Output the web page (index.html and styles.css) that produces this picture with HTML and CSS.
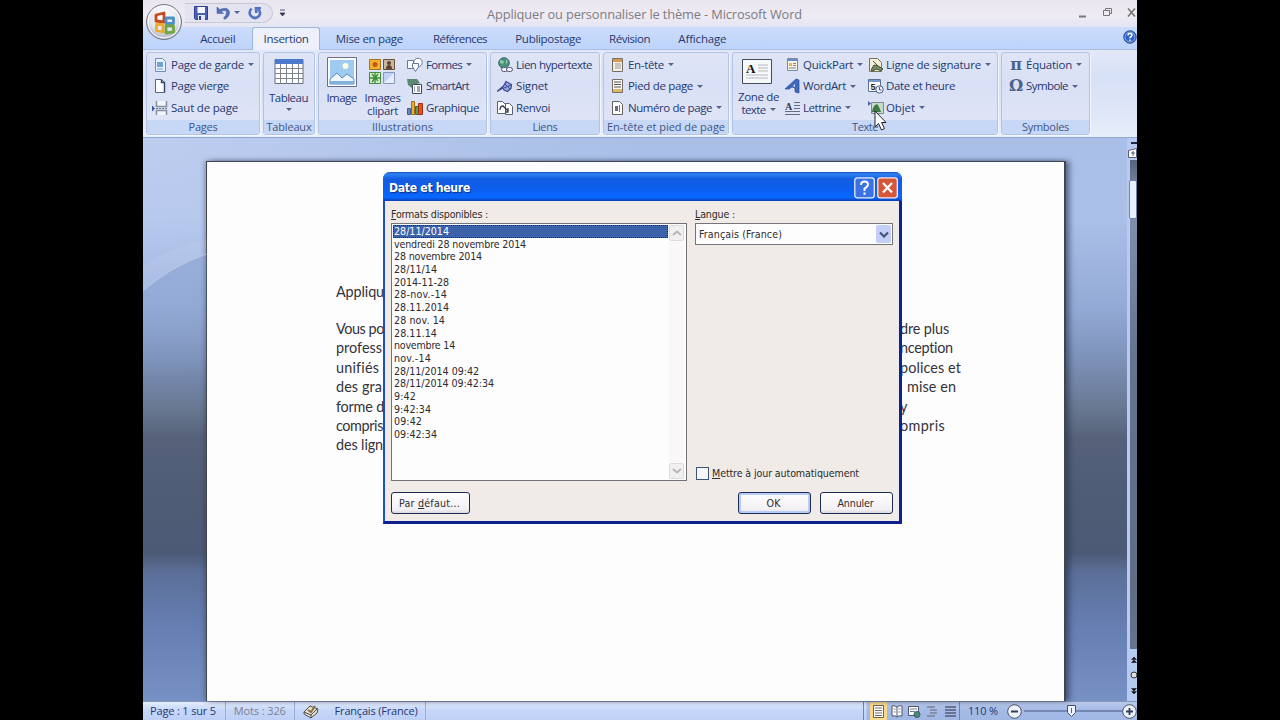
FILE: index.html
```html
<!DOCTYPE html>
<html lang="fr">
<head>
<meta charset="utf-8">
<title>Appliquer ou personnaliser le thème - Microsoft Word</title>
<link rel="stylesheet" href="styles.css">
</head>
<body>
<div class="window">
  <header class="titlebar">
    <div class="qat">
      <svg width="16" height="16" viewBox="0 0 16 16"><path d="M1.500 1.500h13v13h-12l-1-1z" fill="#4b5fb4" stroke="#343f8c"/><path d="M4.500 2h7.500v6H4.500z" fill="#f4f6ff"/><path d="M5 10h7v5H5z" fill="#dfe4f6"/><path d="M6 11h2v4H6z" fill="#34408a"/></svg>
      <svg class="undo" width="14" height="14" viewBox="0 0 14 14"><path d="M1 1v6.500h6.500L5.500 5.300q5-2.300 5 1.200 0 3-3 5.500l1.500 1.500q5-3.500 4.500-7.500-1.500-6-9.500-2.500z" fill="#5672bd" stroke="#44599c" stroke-width=".5"/></svg>
      <i class="arr"></i>
      <svg class="redo" width="14" height="14" viewBox="0 0 14 14"><path d="M3.500 2.500q-3.500 4-.5 7.500 4 4 8 0 2.500-4-1-7" fill="none" stroke="#5672bd" stroke-width="2.600"/><path d="M6.500 1H13v2.200h-3.500V7H7z" fill="#5672bd"/></svg>
    </div>
    <svg class="more" width="7" height="8" viewBox="0 0 7 8"><path d="M1 1h5M1 4h5L3.500 7z" fill="#333a55" stroke="#333a55" stroke-width=".8"/></svg>
    <h1 class="t" data-w="315">Appliquer ou personnaliser le thème - Microsoft Word</h1>
    <svg class="winbtns" width="60" height="16" viewBox="0 0 60 16"><path d="M3 12.500h7" stroke="#777" stroke-width="2"/><path d="M27.500 6.500h6v5h-6zM27 6.500h7M29.500 6v-1.500h6v5h-2" fill="none" stroke="#777"/><path d="M52 4.500l7 8M59 4.500l-7 8" stroke="#777" stroke-width="1.700"/></svg>
  </header>
  <svg class="office" width="40" height="40" viewBox="0 0 40 40">
    <defs><radialGradient id="orb" cx=".5" cy=".3" r=".75"><stop offset="0" stop-color="#fff"/><stop offset=".6" stop-color="#e2e4ec"/><stop offset="1" stop-color="#9aa0b4"/></radialGradient></defs>
    <circle cx="20" cy="20" r="17.500" fill="url(#orb)" stroke="#737886"/><circle cx="20" cy="20" r="16" fill="none" stroke="#fff"/>
    <g fill="none" stroke-width="2.800" stroke-linejoin="round"><path d="M12 13l8-2v9l-8-1z" stroke="#c8491f"/><path d="M22 16h7.500v5.500H22z" stroke="#4c8fca"/><path d="M12.500 22.500H19V30l-6.500-1.500z" stroke="#ecab2f"/><path d="M22 24h7.500v6L22 31z" stroke="#72a546"/></g>
  </svg>
  <nav class="tabs">
    <span class="tab tab1"><b class="t" data-w="35">Accueil</b></span>
    <span class="tab tab2 active"><b class="t" data-w="45">Insertion</b></span>
    <span class="tab tab3"><b class="t" data-w="67">Mise en page</b></span>
    <span class="tab tab4"><b class="t" data-w="54">Références</b></span>
    <span class="tab tab5"><b class="t" data-w="66">Publipostage</b></span>
    <span class="tab tab6"><b class="t" data-w="41">Révision</b></span>
    <span class="tab tab7"><b class="t" data-w="48">Affichage</b></span>
    <svg class="help" width="14" height="14" viewBox="0 0 14 14"><circle cx="7" cy="7" r="6.200" fill="#2d5fc4" stroke="#1c3f94"/><circle cx="7" cy="7" r="5" fill="none" stroke="#a9c4f4" stroke-width=".8"/><path d="M5 5.500q0-2 2-2t2 1.800q0 1-2 2v1M7 9.500v1.500" fill="none" stroke="#fff" stroke-width="1.500"/></svg>
  </nav>
  <section class="ribbon">
    <div class="group g1">
      <div class="body">
        <div class="col c1">
          <div class="cmd"><svg width="16" height="16" viewBox="0 0 16 16"><path d="M3.500 1.500h7l3 3v10h-10z" fill="#e8f1fc" stroke="#6f8fb8"/><path d="M5 5h6v5H5z" fill="#6fa3d8"/><path d="M5 12h6" stroke="#6fa3d8"/></svg><span class="t" data-w="73">Page de garde</span><i class="arr"></i></div>
          <div class="cmd"><svg width="16" height="16" viewBox="0 0 16 16"><path d="M3.500 1.500h6l3 3v10h-9z" fill="#fff" stroke="#55658a"/><path d="M9.500 1.500v3h3v10" fill="none" stroke="#39496d" stroke-width="1.500"/></svg><span class="t" data-w="58">Page vierge</span></div>
          <div class="cmd"><svg width="16" height="16" viewBox="0 0 16 16"><path d="M4.500 1v5.500h10V1M4.500 15v-4.500h10V15" fill="#f5f6f8" stroke="#84909f" stroke-width="1.500"/><path d="M4 8.500h12" stroke="#6c7a90" stroke-dasharray="2 1"/><path d="M0 5.500v6l3-3z" fill="#3a55a0"/></svg><span class="t" data-w="67">Saut de page</span></div>
        </div>
      </div>
      <div class="label"><span class="t" data-w="29">Pages</span></div>
    </div>
    <div class="group g2">
      <div class="body">
        <div class="big b-table"><svg width="30" height="28" viewBox="0 0 30 28"><path d="M1 1.500h28v24H1z" fill="#fff" stroke="#66707f"/><path d="M1 1h28v5H1z" fill="#4c79cb"/><path d="M1 10.500h28M1 15.500h28M1 20.500h28M6.500 6v20M12.500 6v20M18.500 6v20M24.500 6v20" stroke="#808690"/></svg><span class="t" data-w="39">Tableau</span><i class="arr"></i></div>
      </div>
      <div class="label"><span class="t" data-w="45">Tableaux</span></div>
    </div>
    <div class="group g3">
      <div class="body">
        <div class="big b-img"><svg width="30" height="30" viewBox="0 0 30 30"><path d="M.5 .5h29v29H.5z" fill="#fbfcff" stroke="#66718a"/><path d="M3 3h24v24H3z" fill="#9fcaf2"/><circle cx="18.500" cy="9" r="3" fill="#fffbe0"/><path d="M3 22l7-6 5 5 5-4 7 5v5H3z" fill="#eef5fd" stroke="#5e88b8"/><path d="M3 24h24v3H3z" fill="#7fb1df"/></svg><span class="t" data-w="30">Image</span></div>
        <div class="big b-clip"><svg width="27" height="27" viewBox="0 0 27 27"><path d="M.5 1.500h11v10H.5z" fill="#f2b32b" stroke="#a6731f"/><circle cx="6" cy="6.500" r="2.500" fill="#c5541a"/><path d="M14.500 1.500h11v10h-11z" fill="#ccb79b" stroke="#66533d"/><path d="M17 11q0-4 3-4t3 4z" fill="#594536"/><circle cx="20" cy="5" r="2" fill="#594536"/><path d="M.5 14.500h11v11H.5z" fill="#d5efcb" stroke="#478a42"/><path d="M3 16l6 7M9 16l-6 8M6 15v10M1 20h10" stroke="#3e8c3c" stroke-width="1.300"/><path d="M14.500 14.500h11v11h-11z" fill="#bed2f7" stroke="#8796bb"/><path d="M15 25l10-10v10z" fill="#e7effd"/></svg><span class="t" data-w="36">Images</span><span class="t" data-w="31">clipart</span></div>
        <div class="col c3">
          <div class="cmd"><svg width="16" height="16" viewBox="0 0 16 16"><g fill="#fafcff" stroke="#65789e"><circle cx="11" cy="5.500" r="4.300"/><path d="M.5 3.500h6v8h-6z"/><path d="M5.500 6.500h6v3.500l-3 4.500-3-4.500z"/></g></svg><span class="t" data-w="36">Formes</span><i class="arr"></i></div>
          <div class="cmd"><svg width="16" height="16" viewBox="0 0 16 16"><path d="M0 1h10l3 4-3 1H5v4L1 7z" fill="#5b8873"/><path d="M5.500 6.500h9v9h-9z" fill="#fff" stroke="#3f4858"/><path d="M7 9h1m2 0h3M7 11h1m2 0h3M7 13h1m2 0h3" stroke="#46505e"/></svg><span class="t" data-w="43">SmartArt</span></div>
          <div class="cmd"><svg width="16" height="16" viewBox="0 0 16 16"><path d="M.5 8.500h3v6h-3z" fill="#6688ca" stroke="#3f5b94"/><path d="M4.500 1.500h3v13h-3z" fill="#ecae2e" stroke="#a36d12"/><path d="M8.500 6.500h3v8h-3z" fill="#5f9a50" stroke="#39702f"/><path d="M11.500 3.500h4v11h-4z" fill="#dd5526" stroke="#9c3212"/></svg><span class="t" data-w="53">Graphique</span></div>
        </div>
      </div>
      <div class="label"><span class="t" data-w="61">Illustrations</span></div>
    </div>
    <div class="group g4">
      <div class="body">
        <div class="col c4">
          <div class="cmd"><svg width="16" height="16" viewBox="0 0 16 16"><circle cx="7" cy="6" r="5.300" fill="#4d9275" stroke="#366181"/><path d="M3 3l4 1-1 3-3-1zM9 2l2 3-2 2" fill="#8acba8"/><rect x="4.500" y="10.500" width="6" height="4" rx="2" fill="#eef" stroke="#555d70"/><rect x="9.500" y="10.500" width="6" height="4" rx="2" fill="#eef" stroke="#555d70"/></svg><span class="t" data-w="76">Lien hypertexte</span></div>
          <div class="cmd"><svg width="16" height="16" viewBox="0 0 16 16"><path d="M0 13.500L6.500 8 9 3.500l5.500 3-.5 4-3.500 3L7 12l-1-2z" fill="#93a8e5" stroke="#3b4a8c" stroke-width="1.200"/><path d="M8 6l5 5M7 10l7-3" stroke="#3b4a8c"/></svg><span class="t" data-w="32">Signet</span></div>
          <div class="cmd"><svg width="16" height="16" viewBox="0 0 16 16"><path d="M.5 1.500h5l3 3v9h-8zM8.500 3.500h4l3 3v8h-7z" fill="#fff" stroke="#59606f"/><path d="M3 10q0-4 3-4l5 5M11 8v4H8" fill="none" stroke="#374058" stroke-width="1.300"/></svg><span class="t" data-w="34">Renvoi</span></div>
        </div>
      </div>
      <div class="label"><span class="t" data-w="25">Liens</span></div>
    </div>
    <div class="group g5">
      <div class="body">
        <div class="col c5">
          <div class="cmd"><svg width="16" height="16" viewBox="0 0 16 16"><path d="M3.500 1.500h10v13h-10z" fill="#f4efe6" stroke="#776e66"/><path d="M4 2h9v3H4z" fill="#d8974e"/><path d="M6 7h6M6 9h6M6 11h6" stroke="#a19c98"/></svg><span class="t" data-w="36">En-tête</span><i class="arr"></i></div>
          <div class="cmd"><svg width="16" height="16" viewBox="0 0 16 16"><path d="M3.500 1.500h10v13h-10z" fill="#fffdf4" stroke="#776e66"/><path d="M5 4h7M5 6.500h7M5 9h7" stroke="#54514e"/><path d="M4 11h9v3H4z" fill="#e1b56a"/></svg><span class="t" data-w="65">Pied de page</span><i class="arr"></i></div>
          <div class="cmd"><svg width="16" height="16" viewBox="0 0 16 16"><path d="M3.500 1.500h7l3 3v10h-10z" fill="#fff" stroke="#67635f"/><path d="M6 6h3v5H6z" fill="#6c6c72"/><path d="M10.500 5v7" stroke="#777"/></svg><span class="t" data-w="84">Numéro de page</span><i class="arr"></i></div>
        </div>
      </div>
      <div class="label"><span class="t" data-w="118">En-tête et pied de page</span></div>
    </div>
    <div class="group g6">
      <div class="body">
        <div class="big b-zone"><svg width="30" height="26" viewBox="0 0 30 26"><path d="M.5 1.500h29v24H.5z" fill="#f7f8fa" stroke="#444a56"/><path d="M16 7h10M16 10h10M16 13h10M4 17h22M4 20h22" stroke="#b3b8c0"/><text x="4" y="15" class="serifA">A</text></svg><span class="t" data-w="41">Zone de</span><span class="row"><span class="t" data-w="24">texte</span><i class="arr"></i></span></div>
        <div class="col c6">
          <div class="cmd"><svg width="16" height="16" viewBox="0 0 16 16"><path d="M2.500 1.500h10v12h-10z" fill="#f7f4e6" stroke="#7389ad"/><path d="M3 2h9v2H3z" fill="#6c8ac7"/><path d="M4 6h3v3H4z" fill="#e3b751"/><path d="M8 6.500h3M8 8.500h3M4 11h7" stroke="#7d88a0"/></svg><span class="t" data-w="50">QuickPart</span><i class="arr"></i></div>
          <div class="cmd"><svg width="16" height="16" viewBox="0 0 16 16"><path d="M0 11L11 1l3 1v13l-4-1v-4l-3-1-3 2z" fill="#3d68be" stroke="#294a94" stroke-width=".7"/><path d="M8 8l2-2v3z" fill="#dce8ff"/></svg><span class="t" data-w="43">WordArt</span><i class="arr"></i></div>
          <div class="cmd"><svg width="16" height="16" viewBox="0 0 16 16"><text x="0" y="9.500" class="dropA">A</text><path d="M9 2.500h6M9 5.500h6M9 8.500h6M0 11.500h15M0 14.500h15" stroke="#656d80"/></svg><span class="t" data-w="38">Lettrine</span><i class="arr"></i></div>
        </div>
        <div class="col c7">
          <div class="cmd"><svg width="16" height="16" viewBox="0 0 16 16"><path d="M1.500 1.500h8l4 4v9h-12z" fill="#f2efd6" stroke="#77745a"/><path d="M3 13l3-5 4 1 5 3-2 2-4-2-5 2zM5 4l5 5" fill="#739065" stroke="#454e3e"/></svg><span class="t" data-w="95">Ligne de signature</span><i class="arr"></i></div>
          <div class="cmd"><svg width="16" height="16" viewBox="0 0 16 16"><path d="M.5 1.500h12v12H.5z" fill="#fff" stroke="#58709c"/><path d="M1 2h11v2H1z" fill="#7897c7"/><text x="2.500" y="12" class="five">5</text><circle cx="11.500" cy="11.500" r="3.700" fill="#edf4ff" stroke="#4d5a76"/><path d="M11.500 9v3h2" fill="none" stroke="#4d5a76"/></svg><span class="t" data-w="69">Date et heure</span></div>
          <div class="cmd"><svg width="16" height="16" viewBox="0 0 16 16"><path d="M3.500 2.500h12v11h-12z" fill="#c9dbc8" stroke="#798c91"/><path d="M4 12q1-7 5-8 2 2 4 8z" fill="#3e7a47"/><path d="M0 1v5l3-2.500z" fill="#4764a8"/></svg><span class="t" data-w="29">Objet</span><i class="arr"></i></div>
        </div>
      </div>
      <div class="label"><span class="t" data-w="26">Texte</span></div>
    </div>
    <div class="group g7">
      <div class="body">
        <div class="col c8">
          <div class="cmd"><span class="glyph">π</span><span class="t" data-w="46">Équation</span><i class="arr"></i></div>
          <div class="cmd"><span class="glyph">Ω</span><span class="t" data-w="42">Symbole</span><i class="arr"></i></div>
        </div>
      </div>
      <div class="label"><span class="t" data-w="47">Symboles</span></div>
    </div>
  </section>
  <main class="desk">
    <svg class="swoosh" width="64" height="240" viewBox="0 0 64 240"><defs><linearGradient id="fade" x2="0" y2="1"><stop offset="0" stop-color="#5f80b8" stop-opacity=".28"/><stop offset="1" stop-color="#5f80b8" stop-opacity="0"/></linearGradient></defs><path d="M0 110Q28 91 64 83V98Q28 110 0 135z" fill="#fff" fill-opacity=".07"/><path d="M0 135Q28 110 64 98V240H0z" fill="url(#fade)"/><path d="M0 135Q28 110 64 98" fill="none" stroke="#dbe5fa" stroke-opacity=".4"/></svg>
    <article class="page">
      <p class="first"><span class="t" data-w="48">Appliqu</span></p>
      <p><span class="t" data-w="48">Vous po</span><span class="t" data-w="49">dre plus</span></p>
      <p><span class="t" data-w="46">profess</span><span class="t" data-w="53">nception</span></p>
      <p><span class="t" data-w="43">unifiés</span><span class="t" data-w="61">polices et</span></p>
      <p><span class="t" data-w="46">des gra</span><span class="t in" data-w="49">mise en</span></p>
      <p><span class="t" data-w="48">forme d</span><span class="t" data-w="7">y</span></p>
      <p><span class="t" data-w="47">compris</span><span class="t" data-w="45">ompris</span></p>
      <p><span class="t" data-w="47">des lign</span></p>
    </article>
    <aside class="scroll">
      <svg width="9" height="22" viewBox="0 0 9 22"><path d="M3 5h6" stroke="#20283c" stroke-width="2"/><path d="M.5 12.500l8-2v9h-8z" fill="#fff" stroke="#555d75"/><path d="M3 15h4M5 13v5" stroke="#555d75"/></svg>
      <div class="track"><div class="thumb"></div></div>
      <svg width="9" height="52" viewBox="0 0 9 52"><path d="M3.500 10.500l2.500-2.500 2.500 2.500zM3.500 13.500l2.500-2.500 2.500 2.500z" fill="#111" stroke="#111" stroke-width=".5"/><circle cx="6" cy="26" r="3" fill="#ddd" stroke="#333"/><path d="M3.500 39.500l2.500 2.500 2.500-2.500zM3.500 42.500l2.500 2.500 2.500-2.500z" fill="#111" stroke="#111" stroke-width=".5"/></svg>
    </aside>
  </main>
  <footer class="status">
    <span class="st s1"><b class="t" data-w="66">Page : 1 sur 5</b></span>
    <span class="st s2"><b class="t" data-w="52">Mots : 326</b></span>
    <span class="st s3"><svg width="16" height="16" viewBox="0 0 16 16"><path d="M1 9l6-6 8 3-1 4-6 5-7-4z" fill="#e6e2d6" stroke="#4d4a48"/><path d="M1 9l7 3 6-6M8 12v3" fill="none" stroke="#4d4a48"/><path d="M5 7l3 2 4-6" fill="none" stroke="#83713f" stroke-width="2"/></svg><b class="t" data-w="83">Français (France)</b></span>
    <span class="fill"></span>
    <span class="views">
      <svg width="89" height="18" viewBox="0 0 89 18"><path d="M0 0h17v18H0z" fill="#fbd98c"/><path d="M3.500 3.500h10v12h-10z" fill="#fff" stroke="#6e6552"/><path d="M5 6h7M5 8.500h7M5 11h7M5 13.500h7" stroke="#716e66"/><path d="M27 5q-3-2-5-1v10q3-1 5 1 2-2 5-1V4q-3-1-5 1v10" fill="#fff" stroke="#4c566f"/><path d="M23.500 7h2M23.500 10h2M28.500 7h2M28.500 10h2" stroke="#777f92"/><path d="M38.500 4.500h10v9h-10z" fill="#fff" stroke="#4c566f"/><path d="M40 7h7M40 9.500h5" stroke="#777f92"/><circle cx="47" cy="12.500" r="3" fill="#4d8a72" stroke="#355d70"/><path d="M57 5h8M60 8h7M60 11h7M57 14h8" stroke="#7b8397" stroke-width="1.300"/><path d="M75 5h11M75 8h11M75 11h11M75 14h11" stroke="#535d76" stroke-width="1.300"/></svg>
    </span>
    <b class="t pct" data-w="30">110 %</b>
    <svg class="zoom" width="130" height="18" viewBox="0 0 130 18"><path d="M17 9h100" stroke="#42557f"/><path d="M60.500 3.500h8v7l-4 4-4-4z" fill="#edf2fd" stroke="#45516e"/><path d="M64.500 6v5" stroke="#55617e"/><g fill="#eef2fb" stroke="#4b536a"><circle cx="7.500" cy="9.500" r="6.800"/><circle cx="122.500" cy="9.500" r="6.800"/></g><path d="M4 9.500h7M119 9.500h7M122.500 6v7" stroke="#333d57" stroke-width="1.800"/></svg>
  </footer>

  <div class="dialog">
    <div class="dtitle"><strong class="t" data-w="81">Date et heure</strong>
      <svg class="dbtns" width="44" height="22" viewBox="0 0 44 22"><rect x=".8" y=".8" width="19.500" height="20" rx="2.500" fill="#3b72e4" stroke="#e9f0ff" stroke-width="1.300"/><rect x="23.800" y=".8" width="19.500" height="20" rx="2.500" fill="#d5573b" stroke="#ffe9e4" stroke-width="1.300"/><path d="M7 8q0-3.500 3.500-3.500T14 7.500q0 2-3.500 4v2.500M10.500 15.500v2.300" fill="none" stroke="#fff" stroke-width="2"/><path d="M29 6l9 9.500M38 6l-9 9.500" stroke="#fff" stroke-width="2.200"/></svg>
    </div>
    <div class="dmain">
      <div class="left">
        <div class="dl"><span class="t" data-w="97"><u>F</u>ormats disponibles :</span></div>
        <div class="list">
          <ul>
            <li class="sel"><span class="t" data-w="55">28/11/2014</span></li>
            <li><span class="t" data-w="132">vendredi 28 novembre 2014</span></li>
            <li><span class="t" data-w="88">28 novembre 2014</span></li>
            <li><span class="t" data-w="43">28/11/14</span></li>
            <li><span class="t" data-w="55">2014-11-28</span></li>
            <li><span class="t" data-w="53">28-nov.-14</span></li>
            <li><span class="t" data-w="55">28.11.2014</span></li>
            <li><span class="t" data-w="51">28 nov. 14</span></li>
            <li><span class="t" data-w="43">28.11.14</span></li>
            <li><span class="t" data-w="61">novembre 14</span></li>
            <li><span class="t" data-w="37">nov.-14</span></li>
            <li><span class="t" data-w="85">28/11/2014 09:42</span></li>
            <li><span class="t" data-w="100">28/11/2014 09:42:34</span></li>
            <li><span class="t" data-w="22">9:42</span></li>
            <li><span class="t" data-w="37">9:42:34</span></li>
            <li><span class="t" data-w="28">09:42</span></li>
            <li><span class="t" data-w="43">09:42:34</span></li>
          </ul>
          <div class="lscroll"><span class="sb"><svg width="10" height="6" viewBox="0 0 10 6"><path d="M1 5l4-3.500L9 5" fill="none" stroke="#b7b4b4" stroke-width="1.800"/></svg></span><span class="sb"><svg width="10" height="6" viewBox="0 0 10 6"><path d="M1 1l4 3.500L9 1" fill="none" stroke="#b7b4b4" stroke-width="1.800"/></svg></span></div>
        </div>
      </div>
      <div class="right">
        <div class="dl"><span class="t" data-w="40"><u>L</u>angue :</span></div>
        <div class="select"><span class="t" data-w="83">Français (France)</span><span class="drop"><svg width="10" height="7" viewBox="0 0 10 7"><path d="M1 1.500l4 4 4-4" fill="none" stroke="#43527c" stroke-width="2.200"/></svg></span></div>
        <label class="check"><span class="box"></span><span class="t" data-w="147"><u>M</u>ettre à jour automatiquement</span></label>
      </div>
    </div>
    <div class="dfoot">
      <button class="def"><span class="t" data-w="61">Par <u>d</u>éfaut...</span></button>
      <button class="ok"><span class="t" data-w="14">OK</span></button>
      <button class="cancel"><span class="t" data-w="36">Annuler</span></button>
    </div>
  </div>
  <svg class="cursor" width="14" height="22" viewBox="0 0 14 22"><path d="M1 1v16l3.500-3.500L7.500 20l3-1.500-3-6H12z" fill="#fff" stroke="#222"/></svg>
</div>
<script src="fit.js"></script>
</body>
</html>
```
FILE: styles.css
```css
* { box-sizing: border-box; }
body { margin: 0; background: #000; overflow: hidden; }
svg { display: block; flex: none; }
b { font-weight: 400; }
.window { position: relative; width: 994px; height: 720px; margin-left: 143px; overflow: hidden; display: flex; flex-direction: column; font: 11.5px/16px "Open Sans", "Noto Sans", sans-serif; color: #26396f; background: #c5d8fb; }
.t { white-space: pre; display: inline-block; flex: none; justify-self: start; }
.arr { flex: none; width: 0; height: 0; border: 3px solid transparent; border-top: 3px solid #55648c; border-bottom: 0; margin-left: 4px; }

.titlebar { height: 27px; flex: none; background: linear-gradient(#e9e6f0, #eeebf3 60%, #e4e4f3); display: flex; align-items: center; padding-left: 42px; }
.qat { width: 88px; height: 20px; margin-top: -2px; border: 1px solid #c6c8d6; border-left: 0; border-radius: 0 10px 10px 0; background: #e4e4f0; display: flex; align-items: center; padding-left: 8px; }
.undo { margin-left: 7px; }
.redo { margin-left: 8px; }
.more { margin: -2px 0 0 6px; }
.titlebar h1 { font-size: 12.800px; line-height: 20px; font-weight: 400; color: #7d7b83; margin: 1px 0 0 201px; }
.winbtns { margin: -3px 0 0 274px; }
.office { position: absolute; left: 1px; top: 2px; }

.tabs { height: 23px; flex: none; background: linear-gradient(#cbdcfb, #bfd4fb); display: flex; border-bottom: 1px solid #a7bde0; }
.tab { display: flex; height: 23px; align-items: center; justify-content: center; padding-top: 1px; }
.tab1 { width: 68px; margin-left: 41px; }
.tab2 { width: 68px; margin-left: 1px; }
.tab3 { width: 100px; }
.tab4 { width: 83px; }
.tab5 { width: 95px; }
.tab6 { width: 69px; }
.tab7 { width: 78px; }
.active { background: #edf0fb; border: 1px solid #9fb5db; border-bottom: 0; border-radius: 3px 3px 0 0; padding-top: 0; height: 24px; }
.active .t { margin-top: -2px; }
.help { margin: 3px 0 0 382px; }

.ribbon { height: 88px; flex: none; padding: 2px 0 0 3px; display: flex; background: linear-gradient(#e2e8f8, #d7e1f6 30%, #dfe7f8 75%, #e8effb); border-bottom: 1px solid #8fa8ce; }
.group { height: 83px; border: 1px solid #b3c3e2; border-radius: 3px; display: flex; flex-direction: column; margin-right: 3px; background: linear-gradient(#dfe5f6, #d9e0f5 40%, #e2e5f8); flex: none; box-shadow: 1px 1px 0 #f3f6fd; }
.g1 { width: 114px; }
.g2 { width: 52px; margin-right: 3px; }
.g3 { width: 169px; }
.g4 { width: 110px; }
.g5 { width: 126px; }
.g6 { width: 266px; }
.g7 { width: 89px; }
.body { flex: 1; display: flex; }
.label { height: 14px; background: #c7d8f6; display: flex; align-items: center; justify-content: center; font-size: 11px; line-height: 14px; color: #3f5488; }
.col { display: flex; flex-direction: column; padding-top: 1px; }
.cmd { height: 21.500px; display: flex; align-items: center; }
.cmd svg, .glyph { margin-right: 3px; }
.c1 { padding-left: 5px; }
.c3 { padding-left: 6px; }
.c4 { padding-left: 6px; }
.c5 { padding-left: 5px; }
.c6 { padding-left: 1px; width: 84px; }
.c6 svg { margin-right: 2px; }
.c7 svg { margin-right: 2px; }
.c8 { padding-left: 6px; }
.glyph { width: 16px; text-align: center; font: bold 16px/20px "DejaVu Serif", serif; color: #4a608f; }
.c8 .cmd .t { margin-left: -1px; }
.big { display: flex; flex-direction: column; align-items: center; line-height: 13px; padding-top: 5px; }
.big svg { margin-bottom: 5px; }
.b-table { width: 49px; padding-top: 5px; }
.b-table .arr { margin: 4px 0 0; }
.b-img { width: 45px; padding-top: 4px; }
.b-img svg { margin-bottom: 4px; }
.b-clip { width: 37px; }
.b-clip svg { margin-bottom: 6px; }
.b-zone { width: 51px; padding-top: 5px; }
.b-zone svg { margin: 0 3px 6px 0; }
.row { display: flex; align-items: center; }
.serifA { font: bold 13px "Liberation Serif", serif; fill: #111; }
.dropA { font: bold 10px "Liberation Serif", serif; fill: #333c52; }
.five { font: bold 9px "Liberation Sans", sans-serif; fill: #222; }

.desk { position: relative; height: 563px; flex: none; display: flex; padding-top: 23px; background: radial-gradient(ellipse 500px 240px at 0 0, rgba(205, 217, 247, .55), rgba(205, 217, 247, 0)), linear-gradient(#a9bfe7 0, #abc0e8 80px, #93aad6 170px, #7c90b6 225px, #66758e 275px, #56627a 300px, #4f5c76 360px, #4d5a75 415px, #5b6f98 435px, #657db0 485px, #7891c4 563px); }
.swoosh { position: absolute; left: 0; top: 18px; }
.page { width: 860px; margin-left: 63px; flex: none; height: 540px; background: #fefdfe; border: 1px solid #41454f; border-right-width: 2px; border-bottom: 0; padding: 120px 0 0 129px; font: 14.400px/19.400px Lato, sans-serif; color: #34343a; box-shadow: 4px 0 5px rgba(40, 50, 75, .55), -2px 0 4px rgba(40, 50, 75, .3); }
.page p { margin: 0; display: grid; grid-template-columns: 564px auto; justify-content: start; height: 19.400px; }
.page .first { margin-bottom: 17.600px; }
.in { padding-left: 7px; }
.scroll { width: 10px; margin: -23px 0 0 61px; display: flex; flex-direction: column; background: #b7caf2; padding-left: 1px; }
.track { height: 489px; background: linear-gradient(#56637b, #8292ae 40px, #65738d 200px, #5f6c84 430px, #65738c); border-left: 2px solid #b7caf2; padding-top: 20px; }
.thumb { height: 39px; margin-left: -1px; background: #e8effd; border: 1px solid #6e80a7; border-radius: 2px; }

.status { height: 19px; flex: none; display: flex; align-items: center; border-top: 1px solid #8496ba; background: linear-gradient(90deg, rgba(0, 0, 0, 0) 723px, rgba(105, 135, 195, .35) 724px), linear-gradient(#e4ecfd, #c6d7f9 45%, #bed0f6); font-size: 11px; line-height: 16px; }
.st { height: 18px; display: flex; align-items: center; border-right: 1px solid #99aed5; }
.st .t { margin-top: -1px; }
.s1 { width: 83px; padding-left: 7px; }
.s2 { width: 69px; padding-left: 8px; color: #7d8294; }
.s3 { width: 132px; padding-left: 8px; gap: 16px; }
.fill { width: 439px; height: 18px; border-right: 1px solid #7486ac; }
.views { margin-left: 6px; border-right: 1px solid #6d81ac; }
.pct { margin: -1px 0 0 8px; }
.zoom { margin-left: 9px; }

.dialog { position: absolute; left: 240px; top: 172px; width: 519px; height: 352px; border: 2px solid #1a4fc8; border-right: 3px solid #0c2396; border-bottom: 3px solid #0c1f8c; border-top: 0; border-radius: 7px 7px 0 0; background: #f1ebe8; font: 10.600px/13px "DejaVu Sans Condensed", "DejaVu Sans", sans-serif; color: #2d2b2d; display: flex; flex-direction: column; }
.dtitle { height: 29px; margin: 0 -3px 0 -2px; border-radius: 7px 7px 0 0; background: linear-gradient(#1d50b8 0, #2f83f6 2px, #145de0 7px, #0c5ff0 60%, #0867ff 88%, #0a3fb4); display: flex; align-items: center; justify-content: space-between; padding: 3px 4px 0 6px; color: #fff; font-size: 12.200px; text-shadow: 1px 1px 1px #0b2c80; }
.dmain { display: flex; height: 280px; padding: 7px 0 0 6px; }
.left { width: 304px; }
.dl { height: 15px; }
.list { width: 296px; height: 258px; border: 1px solid #73737a; background: #fefdfe; display: flex; justify-content: space-between; padding: 1px 2px 1px 1px; }
.list ul { margin: 0; padding: 0; list-style: none; width: 275px; }
.list li { height: 12.700px; line-height: 13.500px; padding-left: 1px; }
.list .sel { background: #3c62a9; color: #fff; outline: 1px dotted #1b2c56; outline-offset: -1px; }
.lscroll { width: 15px; display: flex; flex-direction: column; justify-content: space-between; background: #faf7f9; }
.sb { height: 16px; display: flex; align-items: center; justify-content: center; background: #f1eff0; border: 1px solid #dedbdd; border-radius: 2px; }
.select { width: 198px; height: 22px; border: 1px solid #74747a; background: #fefdfe; display: flex; align-items: center; justify-content: space-between; padding: 1px 1px 1px 3px; }
.drop { width: 15px; height: 18px; background: #c3cff6; border-radius: 2px; display: flex; align-items: center; justify-content: center; }
.check { display: flex; align-items: center; margin: 222px 0 0 1px; gap: 3px; }
.box { width: 13px; height: 13px; border: 1px solid #3d5574; background: #f5f6fa; }
.dfoot { display: flex; padding: 11px 0 0 6px; }
button { height: 22px; padding: 0 2px 0 0; font: inherit; color: inherit; border: 1px solid #1b2c55; border-radius: 3px; background: linear-gradient(#fefdfe, #f2eff3 85%, #d9d7df); display: flex; align-items: center; justify-content: center; }
.def { width: 79px; }
.ok { width: 73px; margin-left: 268px; box-shadow: inset 0 0 0 2px #b7ccf5; }
.cancel { width: 73px; margin-left: 9px; }
.cursor { position: absolute; left: 731px; top: 110px; }
```
FILE: fit.js
```js
// Spread each label's letters so that it fills its nominal width.
document.querySelectorAll('.t[data-w]').forEach(function (el) {
  var padding = parseFloat(getComputedStyle(el).paddingLeft);
  var natural = el.getBoundingClientRect().width - padding;
  el.style.letterSpacing = (Number(el.dataset.w) - natural) / el.textContent.length + 'px';
});
```
